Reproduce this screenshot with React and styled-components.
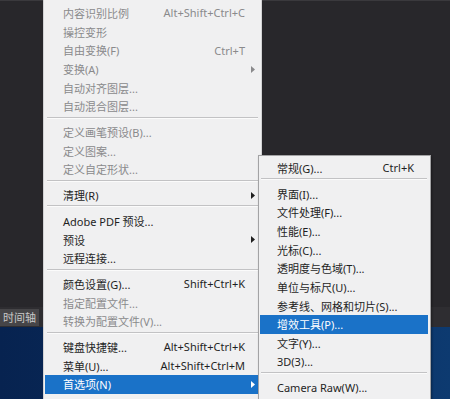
import React from "react";
import styled, { createGlobalStyle } from "styled-components";

const GlobalStyle = createGlobalStyle`
  html, body {
    margin: 0;
    padding: 0;
    background: #28272b;
  }
  body {
    font-family: "Noto Sans", "Noto Sans CJK SC", sans-serif;
  }
`;

const Screen = styled.div`
  position: relative;
  width: 450px;
  height: 399px;
  overflow: hidden;
  display: flex;
  flex-direction: column;
  background: #28272b;
`;

const Workspace = styled.div`
  height: 307px;
  background: #28272b;
  border-top: 1px solid #3a393d;
  box-sizing: border-box;
`;

const PanelBar = styled.div`
  height: 20px;
  display: flex;
  align-items: center;
  background: #2e2d31;
`;

const Tab = styled.div`
  width: 39px;
  height: 17px;
  display: flex;
  align-items: center;
  justify-content: center;
  background: #464548;
  color: #c9c9c9;
  font-size: 11px;
`;

const Desktop = styled.div`
  flex: 1;
  background: linear-gradient(90deg, #072350 0%, #0a2e60 60%, #0d3a70 100%);
`;

const Menu = styled.div`
  position: absolute;
  left: 43px;
  top: -2px;
  width: 219px;
  height: 420px;
  box-sizing: border-box;
  padding-top: 4.6px;
  background: #f0f0f1;
  border: 1px solid #d2d2d4;
`;

const SubMenu = styled.div`
  position: absolute;
  left: 258px;
  top: 155px;
  width: 173px;
  height: 260px;
  box-sizing: border-box;
  padding-top: 2.6px;
  background: #f0f0f1;
  border: 1px solid #a3a3a5;
  box-shadow: 1px 1px 2px rgba(0, 0, 0, 0.35);
`;

const Item = styled.div`
  display: grid;
  grid-template-columns: 1fr auto ${(p) => (p.$sub ? "14px" : "15px")};
  align-items: center;
  height: 18.7px;
  margin: ${(p) => (p.$sub ? "0 2px 0 1px" : "0 1px")};
  padding-left: ${(p) => (p.$sub ? "17px" : "18px")};
  font-size: 11px;
  white-space: nowrap;
  color: ${(p) => (p.$active ? "#ffffff" : p.$disabled ? "#8a8a8c" : "#1f1f1f")};
  background: ${(p) => (p.$active ? "#1a72c8" : "transparent")};
`;

const Shortcut = styled.span`
  text-align: right;
`;

const Arrow = styled.svg`
  justify-self: center;
  width: 4px;
  height: 7px;
  fill: currentColor;
`;

const Separator = styled.div`
  height: 7px;
  padding-top: 1px;
  box-sizing: border-box;
  margin: 0 ${(p) => (p.$sub ? "3px 0 2px" : "3px")};

  &::before {
    content: "";
    display: block;
    height: 1px;
    background: #c2c2c4;
    border-bottom: 1px solid #fbfbfb;
  }
`;

const mainMenu = [
  { label: "内容识别比例", key: "Alt+Shift+Ctrl+C", disabled: true },
  { label: "操控变形", disabled: true },
  { label: "自由变换(F)", key: "Ctrl+T", disabled: true },
  { label: "变换(A)", arrow: true, disabled: true },
  { label: "自动对齐图层...", disabled: true },
  { label: "自动混合图层...", disabled: true },
  "sep",
  { label: "定义画笔预设(B)...", disabled: true },
  { label: "定义图案...", disabled: true },
  { label: "定义自定形状...", disabled: true },
  "sep",
  { label: "清理(R)", arrow: true },
  "sep",
  { label: "Adobe PDF 预设..." },
  { label: "预设", arrow: true },
  { label: "远程连接..." },
  "sep",
  { label: "颜色设置(G)...", key: "Shift+Ctrl+K" },
  { label: "指定配置文件...", disabled: true },
  { label: "转换为配置文件(V)...", disabled: true },
  "sep",
  { label: "键盘快捷键...", key: "Alt+Shift+Ctrl+K" },
  { label: "菜单(U)...", key: "Alt+Shift+Ctrl+M" },
  { label: "首选项(N)", arrow: true, active: true },
];

const prefsMenu = [
  { label: "常规(G)...", key: "Ctrl+K" },
  "sep",
  { label: "界面(I)..." },
  { label: "文件处理(F)..." },
  { label: "性能(E)..." },
  { label: "光标(C)..." },
  { label: "透明度与色域(T)..." },
  { label: "单位与标尺(U)..." },
  { label: "参考线、网格和切片(S)..." },
  { label: "增效工具(P)...", active: true },
  { label: "文字(Y)..." },
  { label: "3D(3)..." },
  "sep",
  { label: "Camera Raw(W)..." },
];

const MenuList = ({ items, sub }) =>
  items.map((it, i) =>
    it === "sep" ? (
      <Separator key={i} $sub={sub} />
    ) : (
      <Item key={i} $sub={sub} $disabled={it.disabled} $active={it.active}>
        <span>{it.label}</span>
        <Shortcut>{it.key}</Shortcut>
        {it.arrow ? (
          <Arrow viewBox="0 0 4 7">
            <polygon points="0,0 4,3.5 0,7" />
          </Arrow>
        ) : (
          <span />
        )}
      </Item>
    )
  );

const App = () => (
  <>
    <GlobalStyle />
    <Screen>
      <Workspace />
      <PanelBar>
        <Tab>时间轴</Tab>
      </PanelBar>
      <Desktop />
      <Menu>
        <MenuList items={mainMenu} />
      </Menu>
      <SubMenu>
        <MenuList items={prefsMenu} sub />
      </SubMenu>
    </Screen>
  </>
);

export default App;
